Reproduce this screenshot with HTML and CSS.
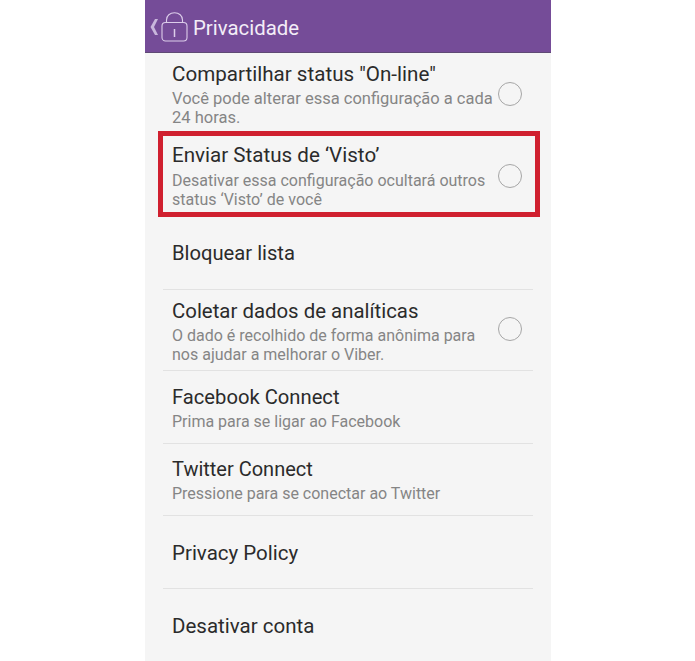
FILE: index.html
```html
<!DOCTYPE html>
<html lang="pt-BR">
<head>
    <meta charset="UTF-8">
    <meta name="viewport" content="width=device-width, initial-scale=1.0">
    <title>Privacidade</title>
    <link rel="stylesheet" href="styles.css">
</head>
<body>
    <div class="phone">
        <header class="topbar">
            <svg class="back" width="8" height="16" viewBox="0 0 8 16">
                <path d="M5 0 H8 L4 8 L8 16 H5 L0.5 8 Z" fill="#c9b6dc"/>
            </svg>
            <svg class="lock" width="27" height="30" viewBox="0 0 27 30" fill="none" stroke="#dccdea" stroke-width="1.1">
                <rect x="1" y="10.5" width="25" height="18.5" rx="3.5"/>
                <path d="M5.5 10.5 V8 C5.5 3.5 9 0.8 13.5 0.8 C18 0.8 21.5 3.5 21.5 8 V10.5"/>
                <path d="M13.5 17 V25" stroke-width="1.5"/>
            </svg>
            <span class="topbar-title">Privacidade</span>
        </header>

        <div class="list">
            <div class="row row-first">
                <div class="row-text">
                    <div class="row-title">Compartilhar status "On-line"</div>
                    <div class="row-sub">Você pode alterar essa configuração a cada<br>24 horas.</div>
                </div>
                <span class="radio"></span>
            </div>
            <div class="row row-marked">
                <div class="row-text">
                    <div class="row-title">Enviar Status de ‘Visto’</div>
                    <div class="row-sub">Desativar essa configuração ocultará outros<br>status ‘Visto’ de você</div>
                </div>
                <span class="radio"></span>
            </div>
            <div class="row row-block">
                <div class="row-title">Bloquear lista</div>
            </div>
            <div class="row row-data">
                <div class="row-text">
                    <div class="row-title">Coletar dados de analíticas</div>
                    <div class="row-sub">O dado é recolhido de forma anônima para<br>nos ajudar a melhorar o Viber.</div>
                </div>
                <span class="radio"></span>
            </div>
            <div class="row row-short">
                <div class="row-text">
                    <div class="row-title">Facebook Connect</div>
                    <div class="row-sub">Prima para se ligar ao Facebook</div>
                </div>
            </div>
            <div class="row row-short row-twitter">
                <div class="row-text">
                    <div class="row-title">Twitter Connect</div>
                    <div class="row-sub">Pressione para se conectar ao Twitter</div>
                </div>
            </div>
            <div class="row row-short row-wide">
                <div class="row-title">Privacy Policy</div>
            </div>
            <div class="row row-short row-wide row-last">
                <div class="row-title">Desativar conta</div>
            </div>
        </div>
    </div>
</body>
</html>
```

FILE: styles.css
```css
html, body {
    margin: 0;
    padding: 0;
    background-color: #fff;
}
body {
    height: 661px;
    overflow: hidden;
    font-family: Roboto, "Liberation Sans", sans-serif;
}
.phone {
    width: 406px;
    height: 661px;
    margin-left: 145px;
    background-color: #f5f5f5;
    overflow: hidden;
}
.topbar {
    display: flex;
    align-items: center;
    height: 52px;
    padding-left: 5px;
    background-color: #754c98;
    border-bottom: 1px solid #5f4a75;
}
.back {
    flex: none;
    margin-top: 2px;
}
.lock {
    flex: none;
    margin-left: 3px;
    margin-top: 1px;
}
.topbar-title {
    margin-left: 5px;
    margin-top: 3px;
    font-size: 20.4px;
    color: #f3edf7;
}
.list {
    padding: 0 18px;
}
.row {
    display: flex;
    align-items: center;
    box-sizing: border-box;
    padding-left: 9px;
    border-bottom: 1px solid #e2e2e2;
}
.row-text {
    flex: 1;
}
.row-title {
    font-size: 20.2px;
    line-height: 24px;
    color: #2b2b2b;
}
.row-sub {
    margin-top: 3px;
    font-size: 16px;
    line-height: 19px;
    color: #858585;
}
.radio {
    flex: none;
    width: 22px;
    height: 22px;
    margin-top: -3px;
    margin-right: 11px;
    border: 1px solid #a6a6a6;
    border-radius: 50%;
}
.row-first {
    height: 78px;
    padding-top: 8px;
    padding-bottom: 3px;
    border-bottom: none;
}
.row-first .row-title,
.row-marked .row-title {
    font-size: 20.6px;
}
.row-first .row-sub {
    font-size: 16.5px;
}
.row-first .radio {
    margin-top: -1px;
}
.row-marked {
    height: 86px;
    margin: 0 -7px 0 -5px;
    padding: 9px 12px 5px 9px;
    border: 5px solid #d0202f;
}
.row-marked .row-sub {
    margin-top: 4px;
}
.row-marked .radio {
    margin-top: -1px;
    margin-right: 1px;
}
.row-block {
    height: 73px;
}
.row-data {
    height: 81px;
    padding-top: 3px;
}
.row-data .row-title {
    font-size: 20.4px;
}
.row-data .radio {
    margin-top: -5px;
}
.row-short {
    height: 73px;
    padding-top: 1px;
}
.row-twitter {
    height: 72px;
}
.row-twitter .row-title {
    font-size: 20px;
}
.row-wide .row-title {
    font-size: 20.5px;
}
.row-last {
    border-bottom: none;
}
```
